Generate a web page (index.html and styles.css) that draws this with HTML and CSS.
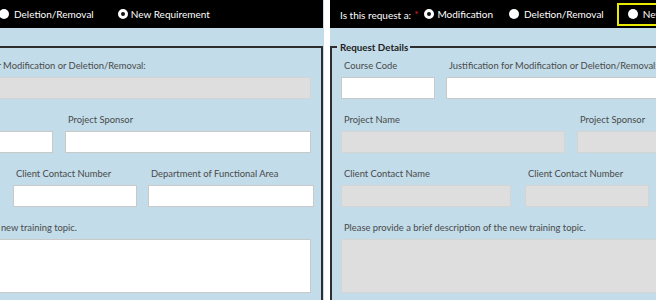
FILE: index.html
```html
<!DOCTYPE html>
<html lang="en">
<head>
    <meta charset="UTF-8">
    <meta name="viewport" content="width=device-width, initial-scale=1.0">
    <title>Training Request - Compare</title>
    <link rel="stylesheet" href="styles.css">
</head>
<body>
    <div class="compare">
        <!-- New Requirement selected -->
        <div class="panel">
            <div class="form">
                <div class="request-bar">
                    <span class="bar-label">Is this request a:<span class="req">*</span></span>
                    <span class="option"><span class="radio"></span>Modification</span>
                    <span class="option"><span class="radio"></span>Deletion/Removal</span>
                    <span class="option new-req"><span class="radio checked"></span>New Requirement</span>
                </div>
                <fieldset class="details">
                    <legend>Request Details</legend>
                    <div class="row">
                        <div class="field code"><label>Course Code</label><input type="text" disabled></div>
                        <div class="field grow"><label>Justification for Modification or Deletion/Removal:</label><input type="text" disabled></div>
                    </div>
                    <div class="row">
                        <div class="field project"><label>Project Name</label><input type="text"></div>
                        <div class="field grow"><label>Project Sponsor</label><input type="text"></div>
                    </div>
                    <div class="row">
                        <div class="field contact"><label>Client Contact Name</label><input type="text"></div>
                        <div class="field number"><label>Client Contact Number</label><input type="text"></div>
                        <div class="field grow dept"><label>Department of Functional Area</label><input type="text"></div>
                    </div>
                    <div class="row">
                        <div class="field grow"><label>Please provide a brief description for the new training topic.</label><textarea></textarea></div>
                    </div>
                </fieldset>
            </div>
        </div>

        <!-- Modification selected -->
        <div class="panel panel-right">
            <div class="form">
                <div class="request-bar">
                    <span class="bar-label">Is this request a:<span class="req">*</span></span>
                    <span class="option"><span class="radio checked"></span>Modification</span>
                    <span class="option"><span class="radio"></span>Deletion/Removal</span>
                    <span class="option new-req focused"><span class="radio"></span>New Requirement</span>
                </div>
                <fieldset class="details">
                    <legend>Request Details</legend>
                    <div class="row">
                        <div class="field code"><label>Course Code</label><input type="text"></div>
                        <div class="field grow"><label>Justification for Modification or Deletion/Removal:</label><input type="text"></div>
                    </div>
                    <div class="row">
                        <div class="field project"><label>Project Name</label><input type="text" disabled></div>
                        <div class="field grow"><label>Project Sponsor</label><input type="text" disabled></div>
                    </div>
                    <div class="row">
                        <div class="field contact"><label>Client Contact Name</label><input type="text" disabled></div>
                        <div class="field number"><label>Client Contact Number</label><input type="text" disabled></div>
                        <div class="field grow dept"><label>Department of Functional Area</label><input type="text" disabled></div>
                    </div>
                    <div class="row">
                        <div class="field grow"><label>Please provide a brief description of the new training topic.</label><textarea disabled></textarea></div>
                    </div>
                </fieldset>
            </div>
        </div>
    </div>
</body>
</html>
```

FILE: styles.css
```css
body {
    margin: 0;
    background-color: #ffffff;
    font-family: Lato, "Open Sans", sans-serif;
}
.compare {
    display: flex;
    gap: 6px;
}
.panel {
    width: 324px;
    height: 300px;
    overflow: hidden;
    background-color: #c2dce9;
}
.panel-right {
    width: 326px;
}
.form {
    width: 505px;
    margin-left: -182px;
}
.panel-right .form {
    width: 503px;
    margin-left: 0;
}
.request-bar {
    height: 28px;
    background-color: #000;
    color: #fff;
    font-size: 10px;
    display: flex;
    align-items: center;
    padding-left: 10px;
}
.bar-label {
    margin-right: 6px;
}
.req {
    color: #e02020;
    margin-left: 3px;
    font-size: 10px;
    vertical-align: 1px;
}
.option {
    display: flex;
    align-items: center;
    height: 23px;
    margin-right: 16px;
}
.option.new-req {
    padding-left: 11px;
    margin-left: -3px;
}
.option.focused {
    outline: 2px solid #e8e800;
    outline-offset: -2px;
    padding-right: 12px;
}
.radio {
    width: 10px;
    height: 10px;
    border-radius: 50%;
    background-color: #fff;
    box-sizing: border-box;
    margin-right: 5px;
}
.radio.checked {
    background-color: #111;
    border: 3px solid #fff;
    margin-right: 3px;
}
.details {
    margin: 12px 0 0;
    padding: 5px 10px 20px 9px;
    border: 2px solid #2e2e2e;
    min-width: 0;
}
.details legend {
    font-size: 9.8px;
    font-weight: bold;
    color: #222;
    line-height: 14px;
    padding: 0 2px 0 3px;
    margin-left: -4px;
}
.row {
    display: flex;
    gap: 12px;
    margin-bottom: 14px;
}
.field {
    display: flex;
    flex-direction: column;
    min-width: 0;
}
.field label {
    font-size: 9.4px;
    line-height: 14px;
    color: #4a4a4a;
    padding-left: 3px;
    margin-bottom: 4px;
    white-space: nowrap;
}
.field.code {
    width: 94px;
    margin-right: -1px;
}
.field.project {
    width: 224px;
}
.field.contact {
    width: 170px;
    margin-right: 2px;
}
.field.number {
    width: 124px;
    margin-right: -1px;
}
.field.grow {
    flex: 1;
}
.field.dept {
    margin-right: -3px;
}
input, textarea {
    box-sizing: border-box;
    height: 22px;
    width: 100%;
    margin: 0;
    border: 1px solid #c9c9c9;
    background-color: #fff;
    font-family: inherit;
}
textarea {
    height: 54px;
    resize: none;
}
input:disabled, textarea:disabled {
    background-color: #dedede;
    border-color: #d4d4d4;
}
```
